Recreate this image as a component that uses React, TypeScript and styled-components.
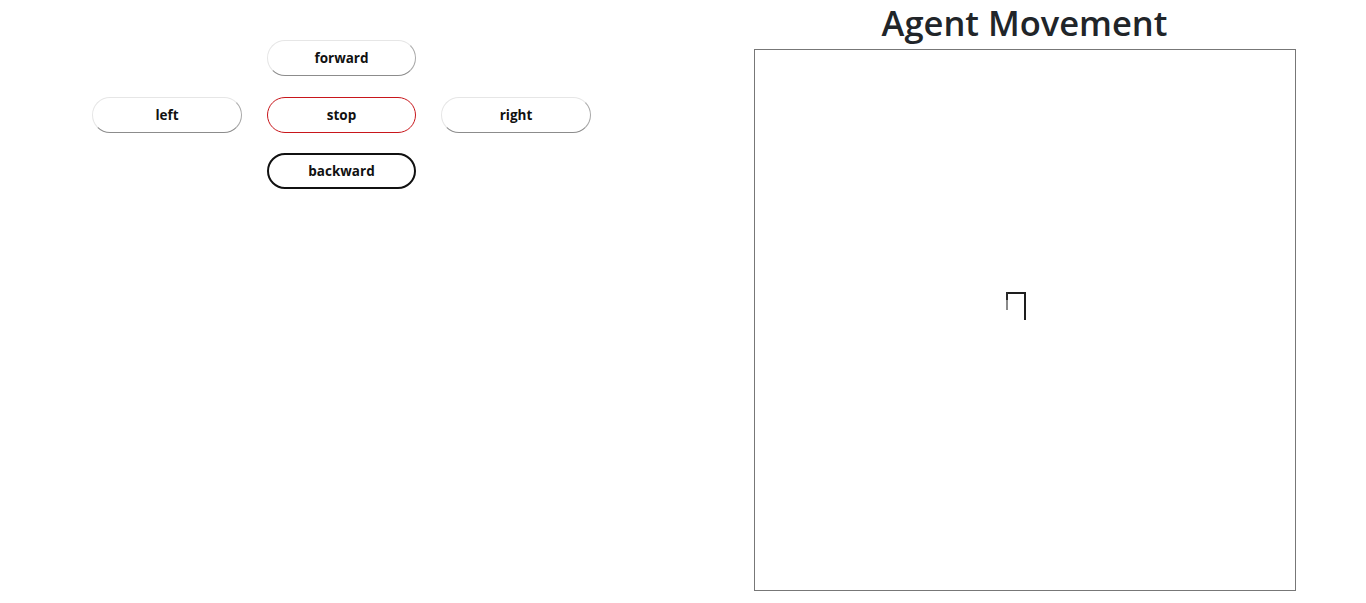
import React from "react";
import styled, { createGlobalStyle, css } from "styled-components";

const Global = createGlobalStyle`
  html, body { margin: 0; padding: 0; background: #fff; }
  body { font-family: "Open Sans", "Noto Sans", sans-serif; color: #212529; }
`;

const Page = styled.div`
  display: grid;
  grid-template-columns: 1fr 1fr;
  width: 1366px;
  height: 603px;
`;

const Controls = styled.div`
  display: grid;
  grid-template-columns: repeat(3, 149.5px);
  grid-template-rows: repeat(3, 36px);
  column-gap: 25px;
  row-gap: 20.5px;
  justify-content: center;
  align-content: start;
  padding-top: 40px;
`;

type Variant = "plain" | "stop" | "active";

const Btn = styled.button<{ $variant: Variant; $col: number; $row: number }>`
  grid-column: ${(p) => p.$col};
  grid-row: ${(p) => p.$row};
  box-sizing: border-box;
  height: 36px;
  width: 100%;
  border-radius: 18px;
  background: #fff;
  font-family: "Open Sans", "Noto Sans", sans-serif;
  font-weight: 700;
  font-size: 13.5px;
  color: #111;
  padding: 0;
  cursor: pointer;
  ${(p) =>
    p.$variant === "plain"
      ? css`
          border: 1px solid #e6e6e6;
          border-right-color: #a8a8a8;
          border-bottom-color: #8c8c8c;
        `
      : p.$variant === "stop"
      ? css`
          border: 1px solid #c8161b;
        `
      : css`
          border: 2px solid #111;
        `}
`;

const Right = styled.div`
  display: flex;
  flex-direction: column;
  align-items: center;
`;

const Title = styled.h1`
  margin: 0;
  height: 49px;
  line-height: 46px;
  font-family: "Open Sans", "Noto Sans", sans-serif;
  font-weight: 600;
  font-size: 34.5px;
  color: #212529;
`;

const Arena = styled.div`
  position: relative;
  box-sizing: border-box;
  width: 542px;
  height: 542px;
  border: 1px solid #777;
  background: #fff;
`;

const Agent = styled.svg`
  position: absolute;
  left: 251px;
  top: 242px;
`;

export default function App() {
  return (
    <>
      <Global />
      <Page>
        <Controls>
          <Btn $variant="plain" $col={2} $row={1}>forward</Btn>
          <Btn $variant="plain" $col={1} $row={2}>left</Btn>
          <Btn $variant="stop" $col={2} $row={2}>stop</Btn>
          <Btn $variant="plain" $col={3} $row={2}>right</Btn>
          <Btn $variant="active" $col={2} $row={3}>backward</Btn>
        </Controls>
        <Right>
          <Title>Agent Movement</Title>
          <Arena>
            <Agent width="20" height="28" viewBox="0 0 20 28">
              <rect x="0" y="0" width="20" height="2" fill="#1e1e1e" />
              <rect x="18" y="0" width="2" height="28" fill="#1e1e1e" />
              <rect x="0" y="0" width="2" height="8" fill="#2a2a2a" />
              <rect x="0" y="8" width="2" height="10" fill="#8a8a8a" />
            </Agent>
          </Arena>
        </Right>
      </Page>
    </>
  );
}
